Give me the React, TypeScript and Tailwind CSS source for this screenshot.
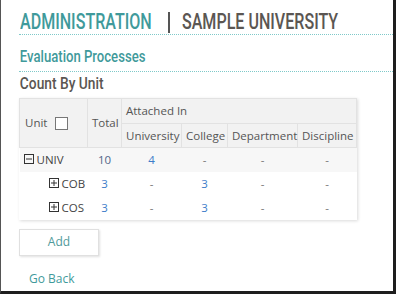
import React from "react";

const cond = { fontFamily: 'Roboto, "DejaVu Sans Condensed", sans-serif' };

function Box({ minus }: { minus?: boolean }) {
  return (
    <svg width="10" height="10" viewBox="0 0 10 10" className="inline-block">
      <rect x="0.5" y="0.5" width="9" height="9" fill="none" stroke="#333" strokeWidth="1" />
      <line x1="2" y1="5" x2="8" y2="5" stroke="#333" strokeWidth="1" />
      {!minus && <line x1="5" y1="2" x2="5" y2="8" stroke="#333" strokeWidth="1" />}
    </svg>
  );
}

export default function App() {
  const rows = [
    { name: "UNIV", indent: false, minus: true, total: "10", u: "4", c: "-", d: "-", di: "-", bg: "bg-[#f7f7f7]" },
    { name: "COB", indent: true, minus: false, total: "3", u: "-", c: "3", d: "-", di: "-", bg: "bg-white" },
    { name: "COS", indent: true, minus: false, total: "3", u: "-", c: "3", d: "-", di: "-", bg: "bg-white" },
  ];
  const val = (v: string, plain?: boolean) =>
    v === "-" ? (
      <span className="text-[#777]">-</span>
    ) : (
      <span className={plain ? "text-[#52668a]" : "text-[#3d7cc9]"}>{v}</span>
    );
  return (
    <div
      className="w-[396px] h-[294px] bg-white border-l border-r-[3px] border-b-[3px] border-l-[#555] border-r-[#1e1e1e] border-b-[#1e1e1e] overflow-hidden"
      style={{ fontFamily: '"Open Sans", sans-serif' }}
    >
      <div className="pl-[18px] pt-[10px]">
        <div className="flex items-center h-[24px] text-[22px] leading-none font-medium" style={cond}>
          <span className="w-[132px] inline-block overflow-visible whitespace-nowrap pl-[1px]">
            <span className="text-[#3f9a9b] inline-block origin-left scale-x-[0.73]">ADMINISTRATION</span>
          </span>
          <span className="ml-[17px] w-[2px] h-[21px] bg-[#555]" />
          <span className="ml-[12px] w-[156px] inline-block whitespace-nowrap">
            <span className="text-[#5b5652] inline-block origin-left scale-x-[0.73]">SAMPLE UNIVERSITY</span>
          </span>
        </div>
        <div className="border-t border-dotted border-[#7fc9c9]" />
        <div className="h-[36px] pt-[7px] flex items-center text-[16px] font-medium whitespace-nowrap" style={cond}>
          <span className="text-[#3f9a9b] inline-block origin-left scale-x-[0.82] pl-[1px]">Evaluation Processes</span>
        </div>
        <div className="border-t border-dotted border-[#7fc9c9]" />
        <div className="h-[26px] pb-[3px] flex items-center text-[16px] font-medium whitespace-nowrap" style={cond}>
          <span className="text-[#5b5652] inline-block origin-left scale-x-[0.86] pl-[1px]">Count By Unit</span>
        </div>
        <table
          className="table-fixed border-collapse text-[11.5px] text-[#555] shadow-[1px_1px_3px_rgba(0,0,0,0.15)]"
          style={{ width: 337 }}
        >
          <colgroup>
            <col style={{ width: 68 }} />
            <col style={{ width: 34 }} />
            <col style={{ width: 60 }} />
            <col style={{ width: 46 }} />
            <col style={{ width: 70 }} />
            <col style={{ width: 59 }} />
          </colgroup>
          <thead>
            <tr className="bg-[#f2f2f2] h-[25px]">
              <th rowSpan={2} className="border border-[#e2e2e2] font-normal text-left pl-[5px]">
                <span className="inline-flex items-center gap-[8px]">
                  Unit
                  <span className="w-[13px] h-[13px] border border-[#777] bg-white inline-block" />
                </span>
              </th>
              <th rowSpan={2} className="border border-[#e2e2e2] font-normal text-left pl-[4px]">
                Total
              </th>
              <th colSpan={4} className="border border-[#e2e2e2] font-normal text-left pl-[4px]">
                Attached In
              </th>
            </tr>
            <tr className="bg-[#f2f2f2] h-[24px]">
              <th className="border border-[#e2e2e2] font-normal text-left pl-[4px] whitespace-nowrap">University</th>
              <th className="border border-[#e2e2e2] font-normal text-left pl-[4px] whitespace-nowrap">College</th>
              <th className="border border-[#e2e2e2] font-normal text-left pl-[4px] whitespace-nowrap">Department</th>
              <th className="border border-[#e2e2e2] font-normal text-left pl-[4px] whitespace-nowrap">Discipline</th>
            </tr>
          </thead>
          <tbody>
            {rows.map((r) => (
              <tr key={r.name} className={`${r.bg} h-[24px]`}>
                <td className="text-left">
                  <span className={`inline-flex items-center gap-[3px] ${r.indent ? "pl-[29px]" : "pl-[4px]"}`}>
                    <Box minus={r.minus} />
                    <span className="text-[#444]">{r.name}</span>
                  </span>
                </td>
                <td className="text-center">{val(r.total, r.total === "10")}</td>
                <td className="text-center">{val(r.u)}</td>
                <td className="text-center">{val(r.c)}</td>
                <td className="text-center">{val(r.d)}</td>
                <td className="text-center">{val(r.di)}</td>
              </tr>
            ))}
          </tbody>
        </table>
        <button className="mt-[9px] w-[80px] h-[27px] border border-[#e0e0e0] bg-white text-[12px] text-[#4f9a9b] shadow-[1px_1px_2px_rgba(0,0,0,0.12)]">
          Add
        </button>
        <div className="mt-[14px] pl-[10px] text-[12px] text-[#3f9a9b]">Go Back</div>
      </div>
    </div>
  );
}
